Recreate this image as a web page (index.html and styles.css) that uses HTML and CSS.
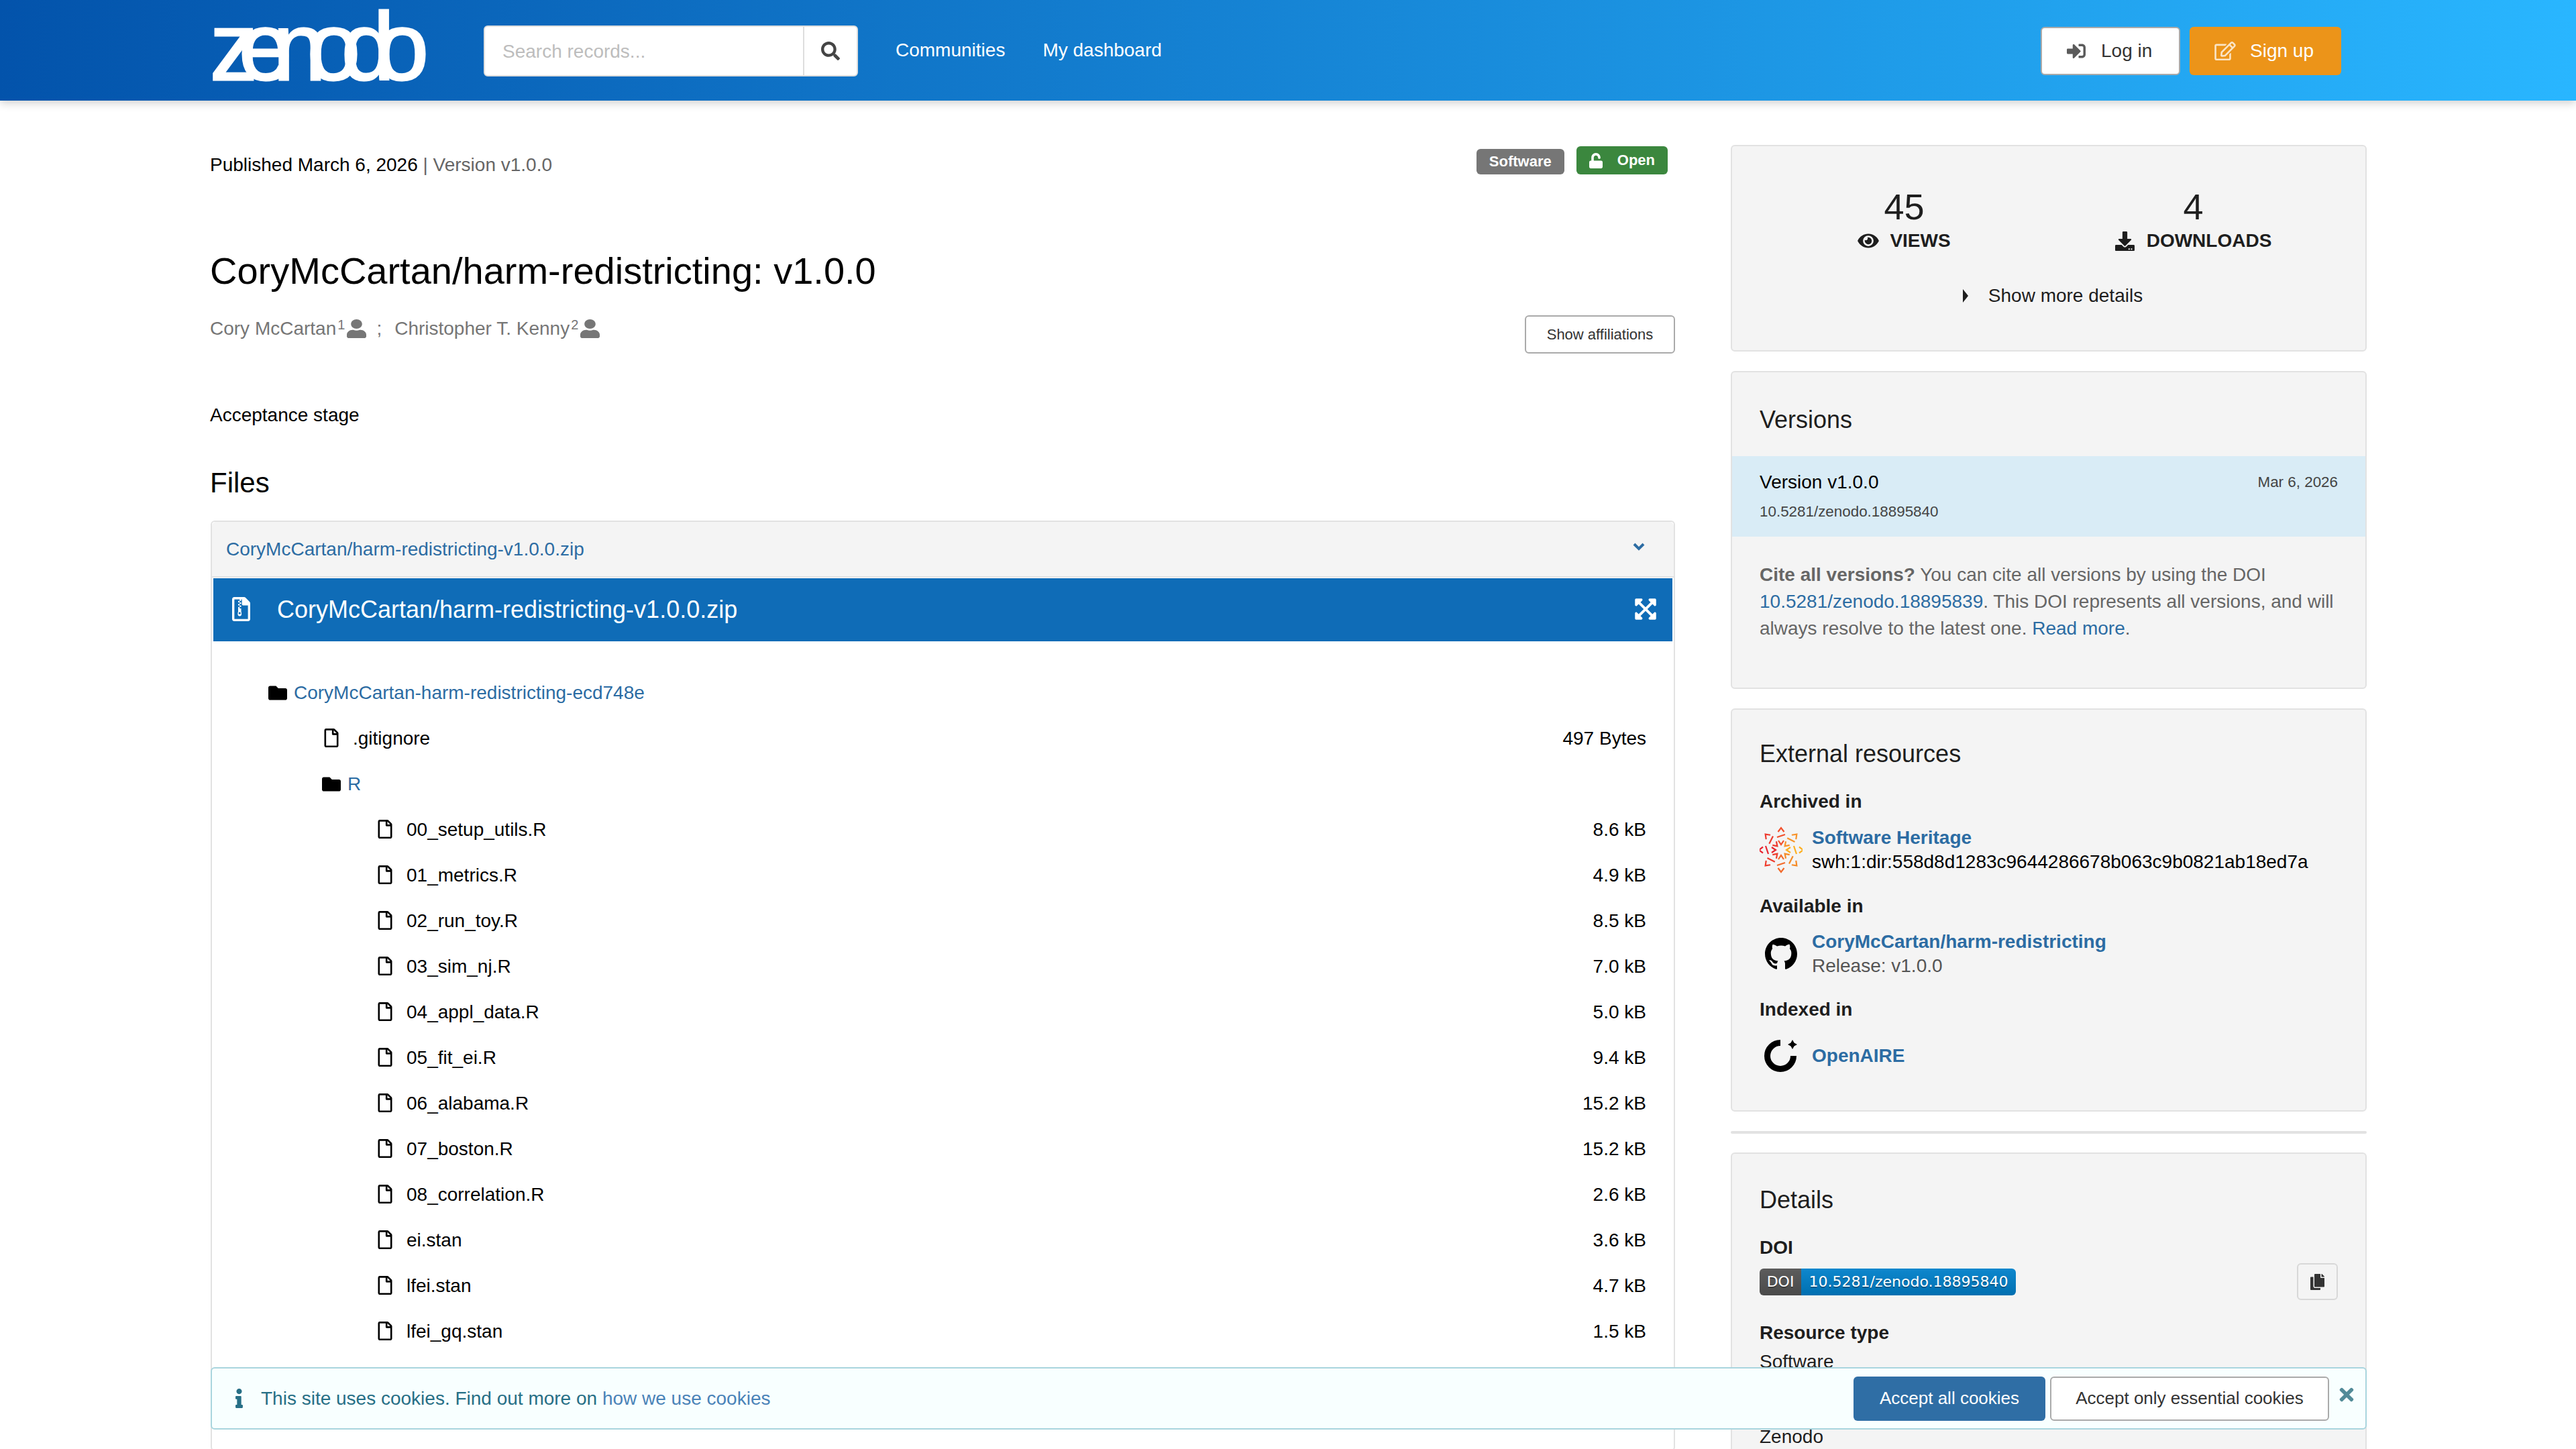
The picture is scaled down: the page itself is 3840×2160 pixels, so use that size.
FILE: index.html
```html
<!DOCTYPE html>
<html lang="en">
<head>
    <meta charset="UTF-8">
    <meta name="viewport" content="width=device-width, initial-scale=1.0">
    <title>CoryMcCartan/harm-redistricting: v1.0.0 - Zenodo</title>
    <link rel="stylesheet" href="styles.css">
</head>
<body>
    <!-- shared icons -->
    <svg class="sprite" aria-hidden="true">
        <symbol id="i-file" viewBox="0 0 384 512"><path d="M369.9 97.9L286 14C277 5 264.8-.1 252.1-.1H48C21.5 0 0 21.5 0 48v416c0 26.5 21.5 48 48 48h288c26.5 0 48-21.5 48-48V131.9c0-12.7-5.1-25-14.1-34zM332.1 128H256V51.9l76.1 76.1zM48 464V48h160v104c0 13.3 10.7 24 24 24h104v288H48z"/></symbol>
        <symbol id="i-folder" viewBox="0 0 512 512"><path d="M464 128H272l-64-64H48C21.49 64 0 85.49 0 112v288c0 26.51 21.49 48 48 48h416c26.51 0 48-21.49 48-48V176c0-26.51-21.49-48-48-48z"/></symbol>
        <symbol id="i-user" viewBox="0 0 448 512" preserveAspectRatio="none"><path d="M224 256c70.7 0 128-57.3 128-128S294.7 0 224 0 96 57.3 96 128s57.3 128 128 128zm89.6 32h-16.7c-22.2 10.2-46.9 16-72.9 16s-50.6-5.8-72.9-16h-16.7C60.2 288 0 348.2 0 422.4V464c0 26.5 21.5 48 48 48h352c26.5 0 48-21.5 48-48v-41.6c0-74.2-60.2-134.4-134.4-134.4z"/></symbol>
    </svg>

    <header class="top-bar">
        <a class="logo">zenodo</a>
        <form class="search">
            <input type="text" placeholder="Search records...">
            <button type="button" class="search-btn">
                <svg class="icon" viewBox="0 0 512 512"><path d="M505 442.7L405.3 343c-4.5-4.5-10.6-7-17-7H372c27.6-35.3 44-79.7 44-128C416 93.1 322.9 0 208 0S0 93.1 0 208s93.1 208 208 208c48.3 0 92.7-16.4 128-44v16.3c0 6.4 2.5 12.5 7 17l99.7 99.7c9.4 9.4 24.6 9.4 33.9 0l28.3-28.3c9.4-9.4 9.4-24.6.1-34zM208 336c-70.7 0-128-57.2-128-128 0-70.7 57.2-128 128-128 70.7 0 128 57.2 128 128 0 70.7-57.2 128-128 128z"/></svg>
            </button>
        </form>
        <nav class="main-nav">
            <a>Communities</a>
            <a>My dashboard</a>
        </nav>
        <div class="auth">
            <a class="btn-login">
                <svg class="icon" viewBox="0 0 512 512"><path d="M416 448h-84c-6.6 0-12-5.4-12-12v-40c0-6.6 5.4-12 12-12h84c17.7 0 32-14.3 32-32V160c0-17.7-14.3-32-32-32h-84c-6.6 0-12-5.4-12-12V76c0-6.6 5.4-12 12-12h84c53 0 96 43 96 96v192c0 53-43 96-96 96zm-47-201L201 79c-15-15-41-4.5-41 17v96H24c-13.3 0-24 10.7-24 24v96c0 13.3 10.7 24 24 24h136v96c0 21.5 26 32 41 17l168-168c9.3-9.4 9.3-24.6 0-34z"/></svg>
                Log in
            </a>
            <a class="btn-signup">
                <svg class="icon" viewBox="0 0 576 512"><path d="M402.3 344.9l32-32c5-5 13.7-1.5 13.7 5.7V464c0 26.5-21.5 48-48 48H48c-26.5 0-48-21.5-48-48V112c0-26.5 21.5-48 48-48h273.5c7.1 0 10.7 8.6 5.7 13.7l-32 32c-1.5 1.5-3.5 2.3-5.7 2.3H48v352h352V350.5c0-2.1.8-4.1 2.3-5.6zm156.6-201.8L296.3 405.7l-90.4 10c-26.2 2.9-48.5-19.2-45.6-45.6l10-90.4L432.9 17.1c22.9-22.9 59.9-22.9 82.7 0l43.2 43.2c22.9 22.9 22.9 60 .1 82.8zM460.1 174L402 115.9 216.2 301.8l-7.3 65.3 65.3-7.3L460.1 174zm64.8-79.7l-43.2-43.2c-4.1-4.1-10.8-4.1-14.8 0L436 82l58.1 58.1 30.9-30.9c4-4.2 4-10.8-.1-14.9z"/></svg>
                Sign up
            </a>
        </div>
    </header>

    <main class="page">
        <section class="record">
            <div class="meta-row">
                <p class="published">Published March 6, 2026 <span class="version">| Version v1.0.0</span></p>
                <div class="badges">
                    <span class="badge badge-type">Software</span>
                    <span class="badge badge-open">
                        <svg class="icon" viewBox="0 0 448 512"><path d="M400 256H152V152.9c0-39.6 31.7-72.5 71.3-72.9 40-.4 72.7 32.1 72.7 72v16c0 13.3 10.7 24 24 24h32c13.3 0 24-10.7 24-24v-16C376 68 307.5-.3 223.5 0 139.5.3 72 69.5 72 153.5V256H48c-26.5 0-48 21.5-48 48v160c0 26.5 21.5 48 48 48h352c26.5 0 48-21.5 48-48V304c0-26.5-21.5-48-48-48z"/></svg>
                        Open
                    </span>
                </div>
            </div>

            <h1 class="record-title">CoryMcCartan/harm-redistricting: v1.0.0</h1>

            <div class="authors-row">
                <p class="authors">
                    <span>Cory McCartan</span><sup>1</sup><svg class="icon user-icon"><use href="#i-user"/></svg>
                    <span class="sep">;</span>
                    <span>Christopher T. Kenny</span><sup>2</sup><svg class="icon user-icon"><use href="#i-user"/></svg>
                </p>
                <button class="btn-affil">Show affiliations</button>
            </div>

            <p class="description">Acceptance stage</p>

            <h2 class="files-title">Files</h2>

            <div class="files-box">
                <div class="files-head">
                    <a class="link">CoryMcCartan/harm-redistricting-v1.0.0.zip</a>
                    <svg class="chevron" viewBox="0 0 20 20"><path d="M3 6l7 7 7-7" fill="none" stroke="#2c6ca3" stroke-width="4"/></svg>
                </div>
                <div class="preview-bar">
                    <svg class="icon zip-icon" viewBox="0 0 384 512"><path d="M369.9 97.9L286 14C277 5 264.8-.1 252.1-.1H48C21.5 0 0 21.5 0 48v416c0 26.5 21.5 48 48 48h288c26.5 0 48-21.5 48-48V131.9c0-12.7-5.1-25-14.1-34zM336 464H48V48h112v32h32V48h16v104c0 13.3 10.7 24 24 24h104zM160 80v32h-32V80zm32 32v32h-32v-32zm-32 32v32h-32v-32zm32 32v32h-32v-32zm-32 32v32h-32v-32zm32 32v64c18 60 10 100-32 100s-50-40-32-100v-64zm-32 80c-14 0-22 8-22 22s8 22 22 22 22-8 22-22-8-22-22-22z"/></svg>
                    <span class="preview-name">CoryMcCartan/harm-redistricting-v1.0.0.zip</span>
                    <svg class="icon expand-icon" viewBox="0 0 448 512"><path d="M448 344v112a23.94 23.94 0 0 1-24 24H312c-21.39 0-32.09-25.9-17-41l36.2-36.2L224 295.6 116.77 402.9 153 439c15.09 15.1 4.39 41-17 41H24a23.94 23.94 0 0 1-24-24V344c0-21.4 25.89-32.1 41-17l36.19 36.2L184.46 256 77.18 148.7 41 185c-15.1 15.1-41 4.4-41-17V56a23.94 23.94 0 0 1 24-24h112c21.39 0 32.09 25.9 17 41l-36.2 36.2L224 216.4l107.23-107.3L295 73c-15.09-15.1-4.39-41 17-41h112a23.94 23.94 0 0 1 24 24v112c0 21.4-25.89 32.1-41 17l-36.19-36.2L263.54 256l107.28 107.3L407 327.1c15.1-15.2 41-4.5 41 16.9z"/></svg>
                </div>
                <ul class="tree">
                    <li class="tree-row depth-0"><svg class="folder-icon"><use href="#i-folder"/></svg><a class="link">CoryMcCartan-harm-redistricting-ecd748e</a></li>
                    <li class="tree-row depth-1"><svg class="file-icon"><use href="#i-file"/></svg><span class="name">.gitignore</span><span class="size">497 Bytes</span></li>
                    <li class="tree-row depth-1"><svg class="folder-icon"><use href="#i-folder"/></svg><a class="link">R</a></li>
                    <li class="tree-row depth-2"><svg class="file-icon"><use href="#i-file"/></svg><span class="name">00_setup_utils.R</span><span class="size">8.6 kB</span></li>
                    <li class="tree-row depth-2"><svg class="file-icon"><use href="#i-file"/></svg><span class="name">01_metrics.R</span><span class="size">4.9 kB</span></li>
                    <li class="tree-row depth-2"><svg class="file-icon"><use href="#i-file"/></svg><span class="name">02_run_toy.R</span><span class="size">8.5 kB</span></li>
                    <li class="tree-row depth-2"><svg class="file-icon"><use href="#i-file"/></svg><span class="name">03_sim_nj.R</span><span class="size">7.0 kB</span></li>
                    <li class="tree-row depth-2"><svg class="file-icon"><use href="#i-file"/></svg><span class="name">04_appl_data.R</span><span class="size">5.0 kB</span></li>
                    <li class="tree-row depth-2"><svg class="file-icon"><use href="#i-file"/></svg><span class="name">05_fit_ei.R</span><span class="size">9.4 kB</span></li>
                    <li class="tree-row depth-2"><svg class="file-icon"><use href="#i-file"/></svg><span class="name">06_alabama.R</span><span class="size">15.2 kB</span></li>
                    <li class="tree-row depth-2"><svg class="file-icon"><use href="#i-file"/></svg><span class="name">07_boston.R</span><span class="size">15.2 kB</span></li>
                    <li class="tree-row depth-2"><svg class="file-icon"><use href="#i-file"/></svg><span class="name">08_correlation.R</span><span class="size">2.6 kB</span></li>
                    <li class="tree-row depth-2"><svg class="file-icon"><use href="#i-file"/></svg><span class="name">ei.stan</span><span class="size">3.6 kB</span></li>
                    <li class="tree-row depth-2"><svg class="file-icon"><use href="#i-file"/></svg><span class="name">lfei.stan</span><span class="size">4.7 kB</span></li>
                    <li class="tree-row depth-2"><svg class="file-icon"><use href="#i-file"/></svg><span class="name">lfei_gq.stan</span><span class="size">1.5 kB</span></li>
                    <li class="tree-row depth-1"><svg class="folder-icon"><use href="#i-folder"/></svg></li>
                </ul>
            </div>
        </section>

        <aside class="sidebar">
            <div class="card stats-card">
                <div class="stats">
                    <div class="stat">
                        <div class="stat-value">45</div>
                        <div class="stat-label">
                            <svg class="icon eye-icon" viewBox="0 0 576 512"><path d="M572.52 241.4C518.29 135.59 410.93 64 288 64S57.68 135.64 3.48 241.41a32.35 32.35 0 0 0 0 29.19C57.71 376.41 165.07 448 288 448s230.32-71.64 284.52-177.41a32.35 32.35 0 0 0 0-29.19zM288 400a144 144 0 1 1 144-144 143.93 143.93 0 0 1-144 144zm0-240a95.31 95.31 0 0 0-25.31 3.79 47.85 47.85 0 0 1-66.9 66.9A95.78 95.78 0 1 0 288 160z"/></svg>
                            Views
                        </div>
                    </div>
                    <div class="stat">
                        <div class="stat-value">4</div>
                        <div class="stat-label">
                            <svg class="icon dl-icon" viewBox="0 0 512 512"><path d="M216 0h80c13.3 0 24 10.7 24 24v168h87.7c17.8 0 26.7 21.5 14.1 34.1L269.7 378.3c-7.5 7.5-19.8 7.5-27.3 0L90.1 226.1c-12.6-12.6-3.7-34.1 14.1-34.1H192V24c0-13.3 10.7-24 24-24zm296 376v112c0 13.3-10.7 24-24 24H24c-13.3 0-24-10.7-24-24V376c0-13.3 10.7-24 24-24h146.7l49 49c20.1 20.1 52.5 20.1 72.6 0l49-49H488c13.3 0 24 10.7 24 24zm-124 88c0-11-9-20-20-20s-20 9-20 20 9 20 20 20 20-9 20-20zm64 0c0-11-9-20-20-20s-20 9-20 20 9 20 20 20 20-9 20-20z"/></svg>
                            Downloads
                        </div>
                    </div>
                </div>
                <div class="more-details"><span class="caret"></span>Show more details</div>
            </div>

            <div class="card versions-card">
                <h3 class="card-title">Versions</h3>
                <div class="version-row">
                    <div class="version-top">
                        <span>Version v1.0.0</span>
                        <span class="version-date">Mar 6, 2026</span>
                    </div>
                    <div class="version-doi">10.5281/zenodo.18895840</div>
                </div>
                <p class="cite-note"><b>Cite all versions?</b> You can cite all versions by using the DOI <a class="link">10.5281/zenodo.18895839</a>. This DOI represents all versions, and will always resolve to the latest one. <a class="link">Read more</a>.</p>
            </div>

            <div class="card resources-card">
                <h3 class="card-title">External resources</h3>
                <h4 class="res-label first">Archived in</h4>
                <div class="res-item swh-item">
                    <svg class="res-logo swh-logo" viewBox="-32 -35 64 70">
                        <defs>
                            <path id="swh-arm" d="M-4.500 -27 L0 -33 L4.500 -27 M-6 -19 L6 -23 M-4 -14 L0 -8 L4 -14" fill="none" stroke-width="2.200"/>
                        </defs>
                        <use href="#swh-arm" stroke="#f2502c"/>
                        <use href="#swh-arm" stroke="#f7932a" transform="rotate(45)"/>
                        <use href="#swh-arm" stroke="#fdb022" transform="rotate(90)"/>
                        <use href="#swh-arm" stroke="#f58a25" transform="rotate(135)"/>
                        <use href="#swh-arm" stroke="#f26a2a" transform="rotate(180)"/>
                        <use href="#swh-arm" stroke="#ee3d2d" transform="rotate(225)"/>
                        <use href="#swh-arm" stroke="#e8252f" transform="rotate(270)"/>
                        <use href="#swh-arm" stroke="#ed3a2e" transform="rotate(315)"/>
                    </svg>
                    <div class="res-text">
                        <a class="link res-link">Software Heritage</a>
                        <div>swh:1:dir:558d8d1283c9644286678b063c9b0821ab18ed7a</div>
                    </div>
                </div>
                <h4 class="res-label">Available in</h4>
                <div class="res-item">
                    <svg class="res-logo github-logo" viewBox="0 0 16 16"><path d="M8 0C3.58 0 0 3.58 0 8c0 3.54 2.29 6.53 5.47 7.59.4.07.55-.17.55-.38 0-.19-.01-.82-.01-1.49-2.01.37-2.53-.49-2.69-.94-.09-.23-.48-.94-.82-1.13-.28-.15-.68-.52-.01-.53.63-.01 1.08.58 1.23.82.72 1.21 1.87.87 2.33.66.07-.52.28-.87.51-1.07-1.78-.2-3.64-.89-3.64-3.95 0-.87.31-1.59.82-2.15-.08-.2-.36-1.02.08-2.12 0 0 .67-.21 2.2.82.64-.18 1.32-.27 2-.27.68 0 1.36.09 2 .27 1.53-1.04 2.2-.82 2.2-.82.44 1.1.16 1.92.08 2.12.51.56.82 1.27.82 2.15 0 3.07-1.87 3.75-3.65 3.95.29.25.54.73.54 1.48 0 1.07-.01 1.93-.01 2.2 0 .21.15.46.55.38A8.013 8.013 0 0016 8c0-4.42-3.58-8-8-8z"/></svg>
                    <div class="res-text">
                        <a class="link res-link">CoryMcCartan/harm-redistricting</a>
                        <div class="res-sub">Release: v1.0.0</div>
                    </div>
                </div>
                <h4 class="res-label indexed">Indexed in</h4>
                <div class="res-item indexed-item">
                    <svg class="res-logo openaire-logo" viewBox="0 0 50 48">
                        <path d="M24 4.500 A19.500 19.500 0 1 0 43.500 24" fill="none" stroke="#000" stroke-width="9"/>
                        <path d="M42 0 L44.500 4.500 L49 7 L44.500 9.500 L42 14 L39.500 9.500 L35 7 L39.500 4.500 Z"/>
                    </svg>
                    <div class="res-text">
                        <a class="link res-link">OpenAIRE</a>
                    </div>
                </div>
            </div>

            <hr class="side-rule">

            <div class="card details-card">
                <h3 class="card-title">Details</h3>
                <h4 class="res-label first">DOI</h4>
                <div class="doi-row">
                    <span class="doi-badge"><span class="doi-key">DOI</span><span class="doi-val">10.5281/zenodo.18895840</span></span>
                    <button class="btn-copy">
                        <svg class="icon" viewBox="0 0 448 512"><path d="M320 448v40c0 13.255-10.745 24-24 24H24c-13.255 0-24-10.745-24-24V120c0-13.255 10.745-24 24-24h72v296c0 30.879 25.121 56 56 56h168zm0-344V0H152c-13.255 0-24 10.745-24 24v368c0 13.255 10.745 24 24 24h272c13.255 0 24-10.745 24-24V128H344c-13.2 0-24-10.8-24-24zm120.971-31.029L375.029 7.029A24 24 0 0 0 358.059 0H352v96h96v-6.059a24 24 0 0 0-7.029-16.97z"/></svg>
                    </button>
                </div>
                <h4 class="res-label detail-label">Resource type</h4>
                <div class="detail-value">Software</div>
                <h4 class="res-label detail-label">Publisher</h4>
                <div class="detail-value publisher">Zenodo</div>
            </div>
        </aside>
    </main>

    <div class="cookie-banner">
        <svg class="icon info-icon" viewBox="0 0 192 512"><path d="M20 424.229h20V279.771H20c-11.046 0-20-8.954-20-20V212c0-11.046 8.954-20 20-20h112c11.046 0 20 8.954 20 20v212.229h20c11.046 0 20 8.954 20 20V492c0 11.046-8.954 20-20 20H20c-11.046 0-20-8.954-20-20v-47.771c0-11.046 8.954-20 20-20zM96 0C56.235 0 24 32.235 24 72s32.235 72 72 72 72-32.235 72-72S135.764 0 96 0z"/></svg>
        <span>This site uses cookies. Find out more on <a class="cookie-link">how we use cookies</a></span>
        <div class="cookie-actions">
            <button class="btn-accept">Accept all cookies</button>
            <button class="btn-essential">Accept only essential cookies</button>
        </div>
        <svg class="icon close-icon" viewBox="0 0 352 512"><path d="M242.72 256l100.07-100.07c12.28-12.28 12.28-32.19 0-44.48l-22.24-22.24c-12.28-12.28-32.19-12.28-44.48 0L176 189.28 75.93 89.21c-12.28-12.28-32.19-12.28-44.48 0L9.21 111.45c-12.28 12.28-12.28 32.19 0 44.48L109.28 256 9.21 356.07c-12.28 12.28-12.28 32.19 0 44.48l22.24 22.24c12.28 12.28 32.2 12.28 44.48 0L176 322.72l100.07 100.07c12.28 12.28 32.2 12.28 44.48 0l22.24-22.24c12.28-12.28 12.28-32.19 0-44.48L242.72 256z"/></svg>
    </div>
</body>
</html>
```

FILE: styles.css
```css
* {
    margin: 0;
    padding: 0;
    box-sizing: border-box;
}

html, body {
    height: 100vh;
    overflow: hidden;
}

body {
    font-family: "Liberation Sans", Arial, sans-serif;
    font-size: 28px;
    line-height: 40px;
    color: #000;
    background-color: #fff;
}

.sprite {
    display: none;
}

.icon {
    display: block;
    fill: currentColor;
    flex: none;
}

.link {
    color: #2c6ca3;
}

button {
    font-family: inherit;
    cursor: pointer;
}

/* Top bar */
.top-bar {
    display: flex;
    align-items: center;
    height: 150px;
    padding: 0 350px 0 313px;
    background: linear-gradient(to right, #0353ab, #29b6ff);
    box-shadow: 0 4px 12px rgba(0, 0, 0, 0.18);
    position: relative;
}

.logo {
    width: 408px;
    height: 130px;
    margin-top: -10px;
    font-size: 142px;
    line-height: 130px;
    letter-spacing: -28px;
    color: #fff;
    -webkit-text-stroke: 3px #fff;
}

.search {
    display: flex;
    width: 558px;
    height: 76px;
    margin-top: 2px;
    background-color: #fff;
    border: 2px solid #dedede;
    border-radius: 6px;
}

.search input {
    flex: 1;
    min-width: 0;
    border: none;
    outline: none;
    background: none;
    padding: 2px 0 0 26px;
    font: 28px "Liberation Sans", Arial, sans-serif;
}

.search input::placeholder {
    color: #bdbdbd;
}

.search-btn {
    width: 80px;
    display: flex;
    align-items: center;
    justify-content: center;
    border: none;
    border-left: 2px solid #dedede;
    background: none;
    color: #444;
}

.search-btn .icon {
    width: 28px;
    height: 28px;
}

.main-nav {
    display: flex;
    gap: 56px;
    margin-left: 56px;
    color: #fff;
}

.auth {
    display: flex;
    gap: 14px;
    margin-left: auto;
    margin-top: 2px;
}

.btn-login,
.btn-signup {
    display: flex;
    align-items: center;
    height: 72px;
    border-radius: 6px;
}

.btn-login {
    width: 208px;
    padding-left: 37px;
    gap: 23px;
    background-color: #fff;
    border: 2px solid #aaa;
    color: #333;
}

.btn-login .icon {
    width: 28px;
    height: 28px;
    opacity: 0.8;
}

.btn-signup {
    width: 226px;
    padding-left: 37px;
    gap: 21px;
    background-color: #ec9419;
    color: #fff;
}

.btn-signup .icon {
    width: 32px;
    height: 28px;
    opacity: 0.75;
}

/* Page columns */
.page {
    display: flex;
    gap: 83px;
    padding: 66px 312px 0 313px;
    height: 2010px;
    overflow: hidden;
}

.record {
    width: 2184px;
    flex: none;
}

.sidebar {
    width: 948px;
    flex: none;
}

/* Record head */
.meta-row {
    display: flex;
    justify-content: space-between;
    align-items: flex-start;
    height: 44px;
    padding-right: 11px;
}

.published {
    margin-top: 10px;
}

.version {
    color: #666;
}

.badges {
    display: flex;
    align-items: flex-end;
    gap: 18px;
    margin-top: 2px;
}

.badge {
    display: flex;
    align-items: center;
    border-radius: 6px;
    font-size: 22px;
    line-height: 24px;
    font-weight: bold;
    color: #fff;
}

.badge-type {
    height: 38px;
    padding: 0 19px;
    background-color: #767676;
}

.badge-open {
    height: 42px;
    gap: 22px;
    padding: 0 19px;
    background-color: #3b873e;
}

.badge-open .icon {
    width: 20px;
    height: 23px;
}

.record-title {
    margin-top: 110px;
    font-size: 56px;
    line-height: 68px;
    font-weight: normal;
}

.authors-row {
    display: flex;
    justify-content: space-between;
    margin-top: 32px;
    height: 57px;
}

.authors {
    display: flex;
    align-items: flex-start;
    color: #767676;
}

.authors sup {
    font-size: 20px;
    line-height: 28px;
    margin-left: 2px;
}

.user-icon {
    width: 29px;
    height: 28px;
    margin: 6px 0 0 3px;
}

.sep {
    margin: 0 19px 0 15px;
}

.btn-affil {
    width: 224px;
    height: 57px;
    background-color: #fff;
    border: 2px solid #aaa;
    border-radius: 6px;
    font-size: 22px;
    color: #333;
}

.description {
    margin-top: 72px;
}

.files-title {
    margin-top: 56px;
    font-size: 42px;
    line-height: 50px;
    font-weight: normal;
}

/* Files box */
.files-box {
    margin: 31px 0 0 1px;
    border: 2px solid #e2e2e2;
    border-radius: 6px;
    padding-bottom: 74px;
}

.files-head {
    display: flex;
    justify-content: space-between;
    align-items: center;
    height: 83px;
    padding: 0 42px 0 21px;
    background-color: #f4f4f4;
    border-bottom: 2px solid #e2e2e2;
    border-radius: 6px 6px 0 0;
}

.chevron {
    width: 20px;
    height: 20px;
    margin-top: -8px;
}

.preview-bar {
    display: flex;
    align-items: center;
    height: 94px;
    margin: 1px 2px 0;
    padding: 0 24px 0 28px;
    background-color: #0f6cb7;
    color: #fff;
}

.zip-icon {
    width: 27px;
    height: 36px;
    margin-top: -2px;
}

.preview-name {
    flex: 1;
    margin-left: 40px;
    font-size: 36px;
}

.expand-icon {
    width: 32px;
    height: 36px;
    margin-top: -2px;
}

.tree {
    list-style: none;
    padding: 43px 41px 0 2px;
}

.tree-row {
    display: flex;
    align-items: center;
    height: 68px;
    line-height: 68px;
}

.depth-0 {
    padding-left: 82px;
}

.depth-1 {
    padding-left: 162px;
}

.depth-2 {
    padding-left: 242px;
}

.folder-icon {
    width: 28px;
    height: 28px;
    margin-right: 10px;
    flex: none;
}

.file-icon {
    width: 22px;
    height: 28px;
    margin: -2px 21px 0 3px;
    flex: none;
}

.name {
    flex: 1;
}

/* Sidebar cards */
.card {
    background-color: #f4f4f4;
    border: 2px solid #e2e2e2;
    border-radius: 6px;
    margin-bottom: 29px;
    color: #1e1e1e;
}

.card-title {
    padding: 0 41px;
    font-size: 36px;
    line-height: 44px;
    font-weight: normal;
}

.stats-card {
    height: 308px;
    padding-top: 63px;
}

.stats {
    display: grid;
    grid-template-columns: 1fr 1fr;
    padding: 0 41px;
    text-align: center;
}

.stat-value {
    font-size: 54px;
    line-height: 54px;
}

.stat-label {
    display: flex;
    align-items: center;
    justify-content: center;
    margin-top: 6px;
    line-height: 36px;
    font-weight: bold;
    text-transform: uppercase;
}

.eye-icon {
    width: 32px;
    height: 28px;
    margin-right: 16px;
}

.dl-icon {
    width: 29px;
    height: 29px;
    margin-right: 18px;
}

.more-details {
    display: flex;
    align-items: center;
    justify-content: center;
    margin-top: 44px;
    padding-left: 12px;
}

.caret {
    width: 0;
    height: 0;
    margin-right: 30px;
    border-style: solid;
    border-width: 10px 0 10px 8px;
    border-color: transparent transparent transparent #1e1e1e;
}

.versions-card {
    padding-top: 49px;
}

.version-row {
    margin-top: 32px;
    height: 120px;
    padding: 19px 41px 0;
    background-color: #d9ecf6;
    color: #000;
}

.version-top {
    display: flex;
    justify-content: space-between;
}

.version-date {
    font-size: 22.4px;
    color: #444;
}

.version-doi {
    margin-top: 8px;
    font-size: 22.4px;
    line-height: 32px;
    color: #444;
}

.cite-note {
    margin-top: 37px;
    padding: 0 41px 68px;
    color: #666;
}

.resources-card {
    padding: 44px 0 45px;
}

.res-label {
    margin-top: 30px;
    padding: 0 41px;
    line-height: 36px;
    font-weight: bold;
}

.res-label.first {
    margin-top: 31px;
}

.res-label.indexed {
    margin-top: 29px;
}

.res-item {
    display: flex;
    align-items: center;
    gap: 14px;
    min-height: 72px;
    margin-top: 17px;
    padding: 0 41px;
    line-height: 36px;
    color: #000;
}

.res-item.swh-item {
    margin-top: 18px;
}

.res-item.indexed-item {
    margin-top: 15px;
}

.res-logo {
    width: 64px;
    flex: none;
}

.swh-logo {
    height: 70px;
}

.github-logo {
    height: 48px;
    padding: 0 8px;
}

.openaire-logo {
    height: 48px;
    padding: 0 7px;
}

.res-link {
    font-weight: bold;
}

.res-sub {
    color: #555;
}

.side-rule {
    height: 4px;
    margin-bottom: 28px;
    border: none;
    border-radius: 2px;
    background-color: #e2e2e2;
}

.details-card {
    padding: 47px 0 60px;
}

.doi-row {
    display: flex;
    justify-content: space-between;
    align-items: center;
    height: 55px;
    margin-top: 5px;
    padding: 0 41px;
}

.doi-badge {
    display: flex;
    height: 40px;
    border-radius: 6px;
    overflow: hidden;
    font: 22px/40px "DejaVu Sans", sans-serif;
    color: #fff;
    text-shadow: 0 2px 0 rgba(1, 1, 1, 0.3);
}

.doi-key {
    width: 62px;
    text-align: center;
    background: linear-gradient(#5c5c5c, #4a4a4a);
}

.doi-val {
    width: 320px;
    text-align: center;
    background: linear-gradient(#0e87cd, #006fb0);
}

.btn-copy {
    display: flex;
    align-items: center;
    justify-content: center;
    width: 61px;
    height: 55px;
    background-color: #f4f4f4;
    border: 2px solid #d8d8d8;
    border-radius: 6px;
    color: #333;
}

.btn-copy .icon {
    width: 21px;
    height: 24px;
}

.detail-label {
    margin-top: 31px;
}

.detail-value {
    margin-top: 7px;
    padding: 0 41px;
    line-height: 36px;
}

.publisher {
    margin-top: 9px;
}

/* Cookie banner, fixed over the page */
.cookie-banner {
    position: fixed;
    left: 314px;
    right: 312px;
    bottom: 29px;
    height: 93px;
    display: flex;
    align-items: center;
    padding: 0 17px 0 35px;
    background-color: #f8ffff;
    border: 2px solid #a9d5de;
    border-radius: 6px;
    color: #276f86;
}

.info-icon {
    width: 11px;
    height: 29px;
    margin-right: 27px;
}

.cookie-link {
    color: #4a83b8;
}

.cookie-actions {
    display: flex;
    gap: 7px;
    margin-left: auto;
}

.btn-accept,
.btn-essential {
    height: 66px;
    border-radius: 6px;
    font-size: 26px;
}

.btn-accept {
    width: 286px;
    border: none;
    background-color: #2f6ea5;
    color: #fff;
}

.btn-essential {
    width: 416px;
    border: 2px solid #aaa;
    background-color: #fff;
    color: #333;
}

.close-icon {
    width: 22px;
    height: 30px;
    margin: 0 0 11px 15px;
    color: #528b98;
}
```
